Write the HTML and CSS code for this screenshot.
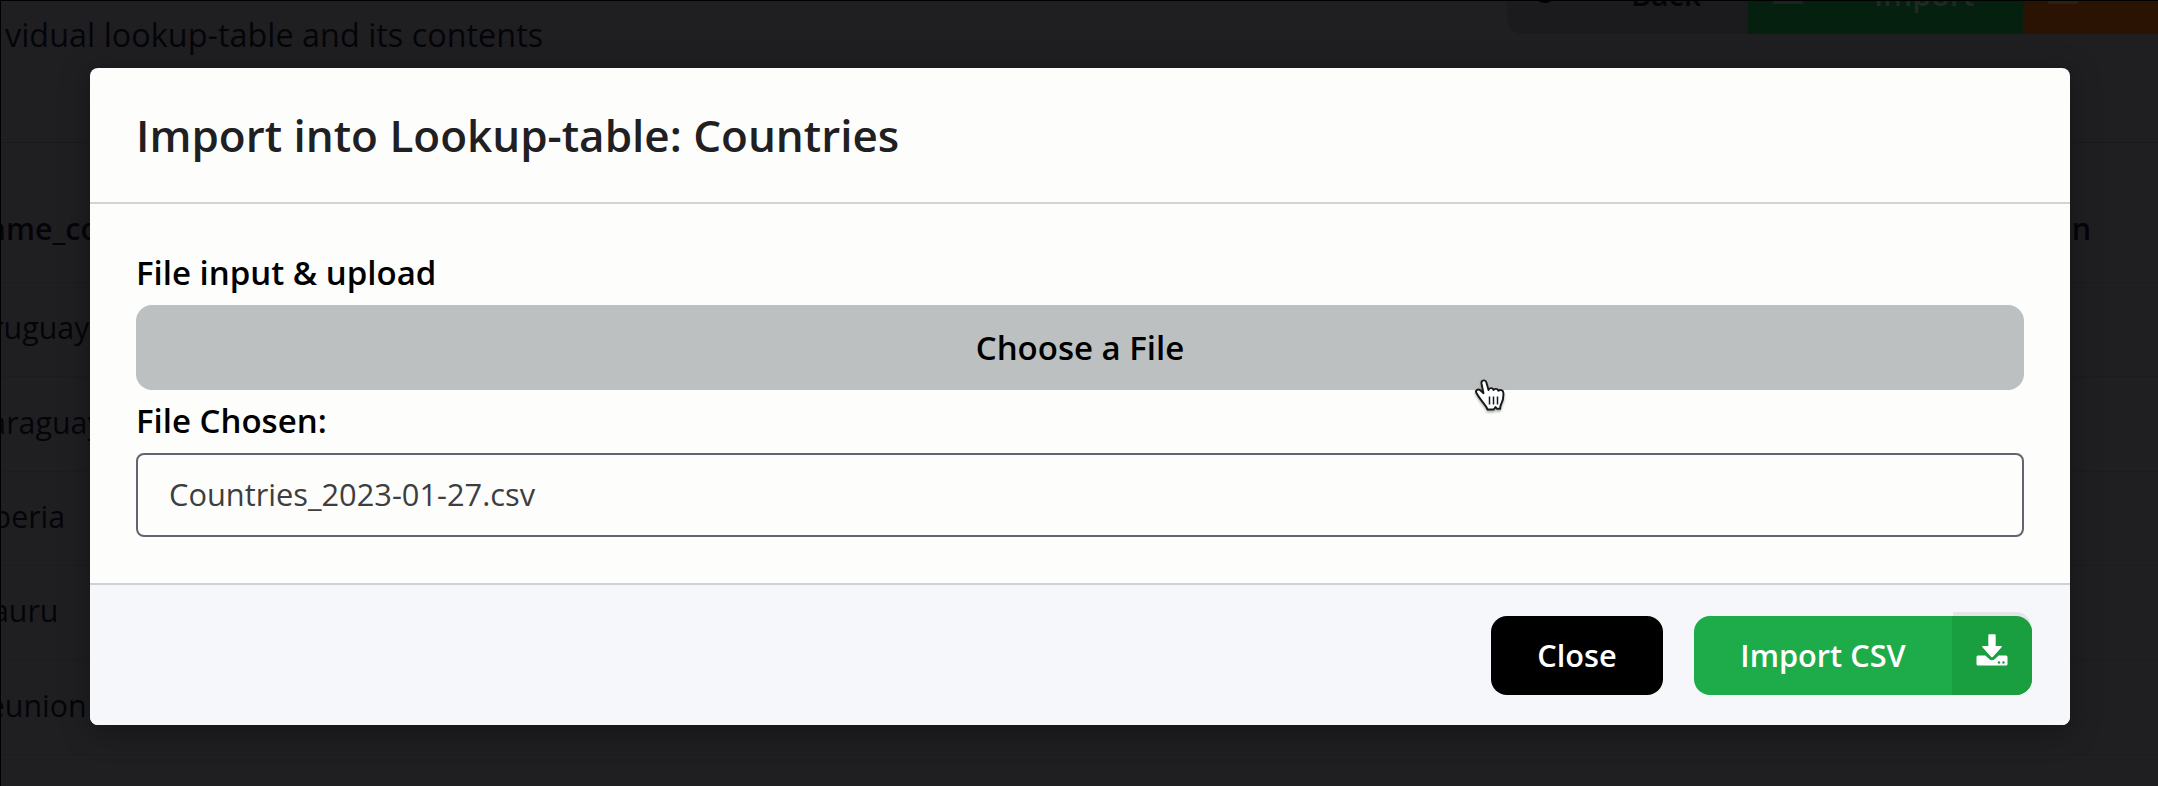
FILE: index.html
```
<!DOCTYPE html>
<html lang="en">
<head>
<meta charset="utf-8">
<title>Import into Lookup-table</title>
<link rel="stylesheet" href="styles.css">
</head>
<body>
<div class="page">
  <header class="page-head">
    <p class="subtitle">vidual lookup-table and its contents</p>
    <div class="toolbar">
      <div class="tool tool-back"><span class="tool-icon"><svg viewBox="0 0 24 24" width="24" height="24"><circle cx="12" cy="12" r="11"/></svg></span><span>Back</span></div>
      <div class="tool tool-import"><span class="tool-dash"></span><span>Import</span></div>
      <div class="tool tool-export"><span class="tool-dash"></span></div>
    </div>
  </header>
  <div class="table">
    <div class="row row-head"><span>name_co</span><span class="last">n</span></div>
    <div class="row"><span>Uruguay</span></div>
    <div class="row row-wide"><span>Paraguay</span></div>
    <div class="row"><span>Liberia</span></div>
    <div class="row"><span>Nauru</span></div>
    <div class="row"><span>Reunion</span></div>
  </div>
</div>

<div class="modal">
  <header class="modal-head"><h2>Import into Lookup-table: Countries</h2></header>
  <div class="modal-body">
    <div class="label">File input &amp; upload</div>
    <div class="choose">Choose a File</div>
    <div class="label">File Chosen:</div>
    <div class="filename">Countries_2023-01-27.csv</div>
  </div>
  <footer class="modal-foot">
    <div class="btn btn-close">Close</div>
    <div class="btn btn-import">
      <span class="btn-text">Import CSV</span>
      <span class="btn-icon"><svg viewBox="0 0 32 32" width="32" height="32"><path fill="#fff" d="M12.3 1.2q0-1 1-1h5.4q1 0 1 1V12h5.2q1.600 0 .7 1.200l-8.600 9.600q-1 1-2 0l-8.600-9.600q-.9-1.200.7-1.200h5.200z"/><path fill="#fff" d="M2 21.500h7.400l3.700 3.500q2.900 2.600 5.800 0l3.700-3.500H30q1.500 0 1.500 1.500v7q0 1.500-1.500 1.500H2Q.5 31.500.5 30v-7q0-1.500 1.500-1.500z"/><circle cx="23" cy="28.500" r="1.200" fill="#1a9c3c"/><circle cx="27.500" cy="28.500" r="1.200" fill="#1a9c3c"/></svg></span>
    </div>
  </footer>
</div>
<svg class="cursor" viewBox="0 0 32 34" width="32" height="34"><path fill="#fff" stroke="#16181c" stroke-width="1.900" stroke-linejoin="round" d="M6.500 4.500c-.5-3.600 4-4.300 4.900-1l2.100 7.500c.8-2.600 4.500-2.500 5 0 1-1.700 4.300-1.500 4.800.7 1.700-1.400 5-.9 5.100 2.300.2 4.500-.3 7.600-2 10.500-1.200 2-1.200 3-1.200 5.200h-3.400l-1.300-1.600-1.800 2.400h-6.200c-.8-3.200-3-5-5-7.600-2.300-3-4.600-6.300-6.200-9.200-1.300-2.600 2-4.200 4-2.500l3.200 3z"/><path fill="none" stroke="#16181c" stroke-width="1.500" d="M14.500 17.500v8M18.500 17.500v8M22.500 17.500v8"/></svg>
</body>
</html>
```
FILE: styles.css
```
* { box-sizing: border-box; }
body {
  margin: 0;
  width: 2158px;
  height: 786px;
  overflow: hidden;
  position: relative;
  background: #1f1f22;
  font-family: "Open Sans", sans-serif;
  color: #000;
}
.page {
  height: 786px;
  border-top: 1px solid #000;
  border-left: 1px solid #000;
  font-size: 30.400px;
  color: #050509;
  overflow: hidden;
}
.page-head {
  height: 142px;
  display: flex;
  justify-content: space-between;
  border-bottom: 1px solid #1a1a1d;
}
.subtitle { margin: 11px 0 0 4px; font-size: 32.400px; line-height: 44px; white-space: nowrap; }
.toolbar { display: flex; height: 33px; overflow: hidden; font-weight: 600; }
.tool { display: flex; align-items: flex-start; line-height: 40px; }
.tool > span:last-child:not(.tool-dash) { margin-top: -26px; }
.tool-back { width: 241px; background: #1b1b1e; border-bottom-left-radius: 16px; }
.tool-icon { width: 124px; padding-left: 26px; margin-top: -21px; line-height: 0; }
.tool-import { width: 275px; background: #05200e; color: #1f2a24; }
.tool-export { width: 135px; background: #2b1304; }
.tool-dash { width: 30px; height: 3px; margin: 0 71px 0 25px; background: #1d2420; }
.tool-export .tool-dash { background: #2e1f14; }
.table { margin-left: -32px; font-kerning: none; }
.row {
  height: 94.400px;
  display: flex;
  align-items: center;
  justify-content: space-between;
  padding-bottom: 4px;
  border-bottom: 1px solid #1c1c1f;
}
.row-head { height: 140px; padding: 31px 0 0; font-weight: 600; }
.row-wide { padding-left: 2px; }
.last { margin-right: 67px; font-weight: 600; }

.modal {
  position: absolute;
  left: 90px;
  top: 68px;
  width: 1980px;
  height: 657px;
  display: flex;
  flex-direction: column;
  border-radius: 8px;
  overflow: hidden;
  background: #fdfdfc;
  box-shadow: 0 6px 30px rgba(0, 0, 0, .35);
}
.modal-head { height: 136px; padding: 0 46px; border-bottom: 2px solid #d3d4da; }
.modal-head h2 { margin: 35px 0 0; font-size: 44px; line-height: 64px; font-weight: 600; color: #202023; }
.modal-body { flex: 1; padding: 47px 46px 0; }
.label { height: 54px; font-size: 33px; line-height: 44px; font-weight: 600; }
.choose {
  height: 85px;
  margin-bottom: 9px;
  border-radius: 16px;
  background: #bcc0c1;
  font-size: 33px;
  font-weight: 600;
  line-height: 85px;
  text-align: center;
}
.filename {
  height: 84px;
  padding-left: 31px;
  border: 2px solid #626470;
  border-radius: 8px;
  font-size: 30.800px;
  line-height: 79px;
  color: #3e3e40;
}
.modal-foot {
  height: 142px;
  padding: 31px 38px 0 0;
  display: flex;
  justify-content: flex-end;
  gap: 31px;
  border-top: 2px solid #cfd0da;
  background: #f6f7fa;
}
.btn {
  height: 79px;
  border-radius: 16px;
  color: #fff;
  font-size: 30.700px;
  font-weight: 600;
  line-height: 79px;
  text-align: center;
  white-space: nowrap;
}
.btn-close { width: 172px; background: #000; }
.btn-import { width: 338px; display: flex; background: #1eac4a; }
.btn-text { width: 258px; }
.btn-icon {
  width: 80px;
  padding: 18px 0 0 24px;
  line-height: 0;
  text-align: left;
  border-radius: 0 16px 16px 0;
  background: #1a9f40;
  box-shadow: 0 -5px 0 -1px #e6e4e9;
}
.cursor { position: absolute; left: 1475px; top: 379px; filter: drop-shadow(0 2px 1px rgba(0, 0, 0, .3)); }
```
